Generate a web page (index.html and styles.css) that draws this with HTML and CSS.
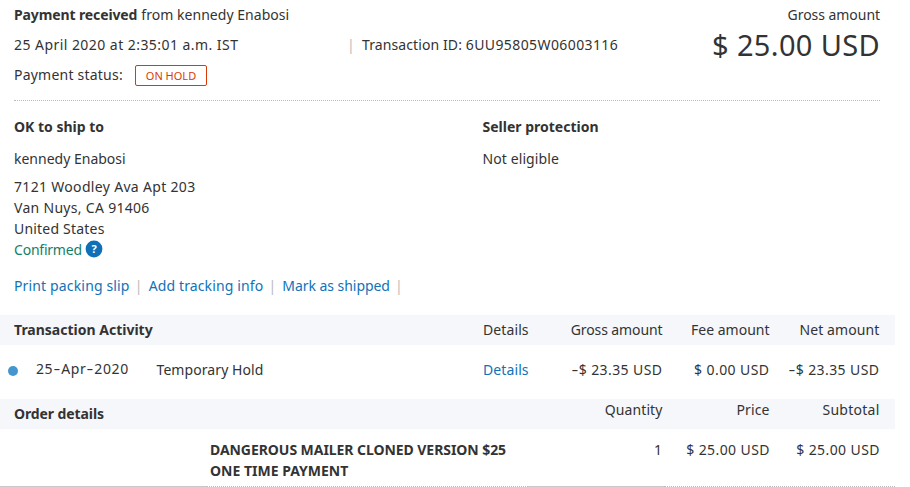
FILE: index.html
```html
<!DOCTYPE html>
<html lang="en">
<head>
  <meta charset="UTF-8">
  <title>Transaction details</title>
  <link rel="stylesheet" href="styles.css">
</head>
<body>
  <div class="page">
    <header class="summary">
      <div class="summary-info">
        <div class="line"><strong class="received">Payment received</strong> <span class="from">from kennedy Enabosi</span></div>
        <div class="line">
          <span class="date">25 April 2020 at 2:35:01 a.m. IST</span>
          <span class="sep">|</span>
          <span class="txn-id">Transaction ID: <span class="txn-code">6UU95805W06003116</span></span>
        </div>
        <div class="line"><span class="status">Payment status:</span><span class="badge">ON HOLD</span></div>
      </div>
      <div class="summary-amount">
        <div class="label">Gross amount</div>
        <div class="total">$ 25.00 USD</div>
      </div>
    </header>

    <section class="info">
      <div class="ship">
        <h2 class="ship-title">OK to ship to</h2>
        <p class="name">kennedy Enabosi</p>
        <address>
          <span class="street">7121 Woodley Ava Apt 203</span><br>
          <span class="city">Van Nuys, CA 91406</span><br>
          <span class="country">United States</span><br>
          <span class="confirmed">Confirmed</span>
          <svg class="help" width="18" height="18" viewBox="0 0 18 18">
            <circle cx="9" cy="9" r="8.4" fill="#0f70b7"/>
            <text x="9" y="13" text-anchor="middle">?</text>
          </svg>
        </address>
      </div>
      <div class="protection">
        <h2 class="protection-title">Seller protection</h2>
        <p class="eligible">Not eligible</p>
      </div>
    </section>

    <nav class="actions">
      <a href="#" class="print">Print packing slip</a><span class="sep">|</span>
      <a href="#" class="track">Add tracking info</a><span class="sep">|</span>
      <a href="#" class="mark">Mark as shipped</a><span class="sep">|</span>
    </nav>

    <!-- Transaction activity -->
    <div class="row band">
      <strong class="title activity-title">Transaction Activity</strong>
      <span class="details">Details</span>
      <span class="num gross">Gross amount</span>
      <span class="num fee">Fee amount</span>
      <span class="num net">Net amount</span>
    </div>
    <div class="row activity">
      <div class="title event">
        <i class="dot"></i>
        <span class="event-date">25<span class="dash">-</span>Apr<span class="dash">-</span>2020</span>
        <span class="event-name">Temporary Hold</span>
      </div>
      <a href="#" class="details">Details</a>
      <span class="num value"><span class="dash">-</span>$ 23.35 USD</span>
      <span class="num value">$ 0.00 USD</span>
      <span class="num value"><span class="dash">-</span>$ 23.35 USD</span>
    </div>

    <!-- Order details -->
    <div class="row band order-band">
      <strong class="title order-title">Order details</strong>
      <span class="details"></span>
      <span class="num quantity">Quantity</span>
      <span class="num price">Price</span>
      <span class="num subtotal">Subtotal</span>
    </div>
    <div class="order">
      <div class="blank"></div>
      <div class="item"><strong><span class="item-one">DANGEROUS MAILER CLONED VERSION $25</span><br><span class="item-two">ONE TIME PAYMENT</span></strong></div>
      <div class="qty">1</div>
      <div class="unit value">$ 25.00 USD</div>
      <div class="sub value">$ 25.00 USD</div>
    </div>
  </div>
</body>
</html>
```

FILE: styles.css
```css
* {
  box-sizing: border-box;
}

body {
  margin: 0;
  background: #fff;
  color: #333;
  font-family: "Noto Sans", sans-serif;
  font-size: 14px;
  line-height: 21px;
  overflow: hidden;
}

.page {
  width: 895px;
}

a {
  color: #1072b8;
  text-decoration: none;
}

h2, p {
  margin: 0;
  font-size: 14px;
}

span, strong, h2, a {
  white-space: nowrap;
}

/* Summary */
.summary {
  display: flex;
  justify-content: space-between;
  height: 101px;
  margin: 0 15px 0 14px;
  border-bottom: 1px dotted #bbb;
}

.line {
  display: flex;
  align-items: center;
  gap: 4px;
  height: 30px;
}

.line > span, .line > strong {
  margin-top: -2px;
}

.received {
  letter-spacing: -0.12px;
}

.from {
  letter-spacing: 0.04px;
}

.date {
  width: 329px;
  letter-spacing: 0.45px;
}

.sep {
  color: #bbb;
}

.line .sep {
  width: 11px;
}

.txn-id {
  letter-spacing: 0.1px;
}

.txn-code {
  letter-spacing: 0.4px;
}

.status {
  width: 117px;
  letter-spacing: 0.22px;
}

.line .badge {
  width: 72px;
  height: 21px;
  margin-top: 0;
  border: 1px solid #d83c06;
  border-radius: 2px;
  color: #d83c06;
  font-size: 11px;
  line-height: 20px;
  text-align: center;
}

.summary-amount {
  padding-top: 4px;
  text-align: right;
}

.label {
  letter-spacing: -0.05px;
}

.total {
  font-size: 29px;
  line-height: 40px;
  letter-spacing: 0.35px;
}

/* Shipping and protection */
.info {
  display: flex;
  height: 160px;
  padding: 15px 14px 0;
}

.ship {
  width: 468.5px;
}

.info p {
  margin: 11px 0 7px;
}

.eligible {
  letter-spacing: 0.1px;
}

address {
  font-style: normal;
}

.street {
  letter-spacing: 0.32px;
}

.city {
  letter-spacing: 0.3px;
}

.country {
  letter-spacing: 0.2px;
}

.confirmed {
  color: #138064;
  letter-spacing: -0.22px;
}

.help {
  vertical-align: -3px;
}

.help text {
  fill: #fff;
  font-size: 11px;
  font-weight: 700;
}

.actions {
  display: flex;
  height: 54px;
  padding: 14px 14px 0;
}

.print {
  letter-spacing: 0.15px;
}

.track {
  letter-spacing: 0.13px;
}

.mark {
  letter-spacing: -0.05px;
}

.actions .sep {
  width: 19px;
  padding-right: 1px;
  text-align: center;
}

/* Tables */
.row {
  display: grid;
  grid-template-columns: 469px 72px 107.5px 107px 110px;
  align-items: center;
  height: 30px;
  padding: 0 15px 2px 14px;
}

.band {
  background: #f5f7fb;
}

.num {
  justify-self: end;
}

.details {
  letter-spacing: 0.1px;
}

.gross {
  letter-spacing: -0.1px;
}

.net {
  letter-spacing: 0.1px;
}

.value {
  letter-spacing: 0.42px;
}

.dash {
  display: inline-block;
  width: 8px;
  letter-spacing: 0;
  text-align: center;
  transform: scaleX(1.5);
}

.activity {
  height: 54px;
  padding-bottom: 5px;
}

.event {
  display: flex;
  align-items: center;
}

.dot {
  width: 10px;
  height: 10px;
  margin: 3px 18px 0 -6px;
  border-radius: 50%;
  background: #4596ce;
}

.event-date {
  width: 120.5px;
  margin-top: -2px;
  letter-spacing: 0.6px;
}

.event-name {
  letter-spacing: 0.08px;
}

.order-title {
  letter-spacing: -0.1px;
}

.order-band .num {
  margin-bottom: 7px;
}

.quantity, .price {
  letter-spacing: 0.1px;
}

.subtotal {
  letter-spacing: 0.25px;
}

.order {
  display: grid;
  grid-template-columns: 207px 321px 136px 106px 125px;
  height: 58px;
}

.order > div {
  padding-top: 10px;
  border-bottom: 1px dotted #bbb;
  text-align: right;
}

.order .blank, .order .qty {
  border-bottom: 1px solid #c8c8c8;
}

.order .item {
  padding-left: 3px;
  text-align: left;
}

.item-one {
  letter-spacing: -0.06px;
}

.order .qty {
  padding-right: 2px;
}

.order .sub {
  padding-right: 15px;
}
```
